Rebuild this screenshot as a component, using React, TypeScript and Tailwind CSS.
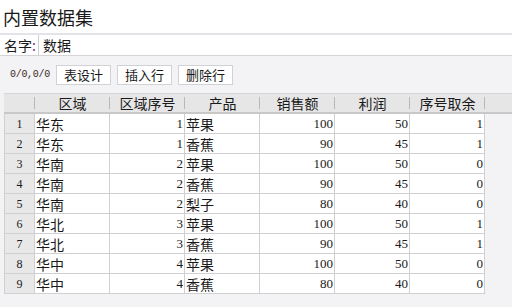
const rows = [
  ["华东", 1, "苹果", 100, 50, 1],
  ["华东", 1, "香蕉", 90, 45, 1],
  ["华南", 2, "苹果", 100, 50, 0],
  ["华南", 2, "香蕉", 90, 45, 0],
  ["华南", 2, "梨子", 80, 40, 0],
  ["华北", 3, "苹果", 100, 50, 1],
  ["华北", 3, "香蕉", 90, 45, 1],
  ["华中", 4, "苹果", 100, 50, 0],
  ["华中", 4, "香蕉", 80, 40, 0],
];

const headers = ["区域", "区域序号", "产品", "销售额", "利润", "序号取余"];

const cjk = "font-['Noto_Sans_CJK_SC',sans-serif]";
const num = "font-['Liberation_Serif','DejaVu_Serif',serif]";

const App = () => {
  return (
    <div className={`w-[512px] h-[307px] overflow-hidden bg-[#f3f3f5] text-[#1a1a1a] ${cjk}`}>
      <div className="h-[33px] bg-white pl-[3px] flex items-center text-[18px] leading-none">
        内置数据集
      </div>
      <div className="h-[2px] bg-[#e4e4e8]" />
      <div className="h-[21px] bg-white flex items-stretch border-b border-[#d4d4d6]">
        <div className="w-[38px] pl-[4px] flex items-center text-[14px] leading-none">
          名字<span className="text-[#7a3a8a]">:</span>
        </div>
        <div className="flex-1 border-l border-[#cfcfd2] pl-[4px] flex items-center text-[14px] leading-none">
          数据
        </div>
      </div>
      <div className="h-[37px] flex items-center gap-[6px] pl-[10px]">
        <span className="font-['Liberation_Mono',monospace] text-[10px] tracking-[-0.3px] text-[#3a2a20] w-[40px]">0/0,0/0</span>
        {["表设计", "插入行", "删除行"].map((b) => (
          <div
            key={b}
            className="w-[55px] h-[20px] bg-white border border-[#d2d2d4] flex items-center justify-center text-[13px] leading-none"
          >
            {b}
          </div>
        ))}
      </div>
      <div className="ml-[4px]">
        <div className="h-[21px] flex bg-[#e6e6e6] border-t border-[#d6d6d8] border-b-2 border-b-[#c8c8c8]">
          <div className="w-[31px] relative">
            <div className="absolute right-0 top-[3px] bottom-[3px] w-px bg-[#b8b8b8]" />
          </div>
          {headers.map((h) => (
            <div key={h} className="w-[75px] relative flex items-center justify-center text-[14px] leading-none">
              {h}
              <div className="absolute right-0 top-[3px] bottom-[3px] w-px bg-[#b8b8b8]" />
            </div>
          ))}
        </div>
        {rows.map((r, i) => (
          <div key={i} className="h-[20px] flex w-[481px] border-b border-[#d0d0d2] border-l bg-white text-[14px] leading-none">
            <div className={`w-[30px] bg-[#e8e8e8] border-r border-[#d0d0d2] flex items-center justify-center text-[12px] ${num}`}>
              {i + 1}
            </div>
            {r.map((c, j) => (
              <div
                key={j}
                className={
                  typeof c === "number"
                    ? `w-[75px] border-r border-[#d0d0d2] flex items-center justify-end pr-[1px] text-[13px] ${num}`
                    : "w-[75px] border-r border-[#d0d0d2] flex items-center pl-[1px]"
                }
              >
                {c}
              </div>
            ))}
          </div>
        ))}
      </div>
    </div>
  );
};

export default App;
